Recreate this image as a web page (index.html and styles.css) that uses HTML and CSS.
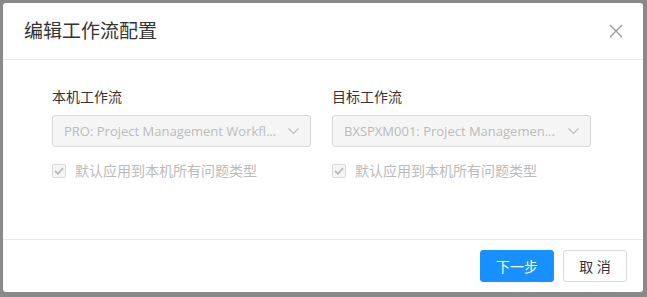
FILE: index.html
```html
<!DOCTYPE html>
<html lang="zh-CN">
<head>
  <meta charset="utf-8">
  <title>编辑工作流配置</title>
  <link rel="stylesheet" href="styles.css">
</head>
<body>
  <div class="dialog">
    <div class="dialog-header">
      <span class="dialog-title">编辑工作流配置</span>
      <button class="close-btn" aria-label="关闭">
        <svg width="14" height="14" viewBox="0 0 14 14"><path d="M1 1L13 13M13 1L1 13" stroke="#999" stroke-width="1.3" fill="none"/></svg>
      </button>
    </div>

    <div class="dialog-body">
      <div class="field">
        <div class="field-label">本机工作流</div>
        <div class="select disabled">
          <span class="select-value">PRO: Project Management Workfl...</span>
          <svg class="select-arrow" width="11" height="7" viewBox="0 0 11 7"><path d="M0.5 0.5L5.5 5.5L10.5 0.5" stroke="#bbb" stroke-width="1.1" fill="none"/></svg>
        </div>
        <label class="check disabled">
          <span class="check-box">
            <svg width="10" height="8" viewBox="0 0 10 8"><path d="M1 4L4 6.8L9 1" stroke="#bbb" stroke-width="1.8" fill="none"/></svg>
          </span>
          <span>默认应用到本机所有问题类型</span>
        </label>
      </div>

      <div class="field">
        <div class="field-label">目标工作流</div>
        <div class="select disabled">
          <span class="select-value">BXSPXM001: Project Managemen...</span>
          <svg class="select-arrow" width="11" height="7" viewBox="0 0 11 7"><path d="M0.5 0.5L5.5 5.5L10.5 0.5" stroke="#bbb" stroke-width="1.1" fill="none"/></svg>
        </div>
        <label class="check disabled">
          <span class="check-box">
            <svg width="10" height="8" viewBox="0 0 10 8"><path d="M1 4L4 6.8L9 1" stroke="#bbb" stroke-width="1.8" fill="none"/></svg>
          </span>
          <span>默认应用到本机所有问题类型</span>
        </label>
      </div>
    </div>

    <div class="dialog-footer">
      <button class="btn btn-primary">下一步</button>
      <button class="btn btn-default">取 消</button>
    </div>
  </div>
</body>
</html>
```

FILE: styles.css
```css
body {
  margin: 0;
  padding: 3px;
  background: #898989;
  font-family: "Open Sans", "Noto Sans CJK SC", sans-serif;
  font-size: 14px;
  color: #333;
  height: 100vh;
  box-sizing: border-box;
}

.dialog {
  width: 640px;
  height: 289px;
  background: white;
  border-radius: 3px;
  display: flex;
  flex-direction: column;
  box-sizing: border-box;
}

.dialog-header {
  height: 57px;
  display: flex;
  align-items: center;
  justify-content: space-between;
  padding: 0 20px 0 21px;
  border-bottom: 1px solid #e8e8e8;
  box-sizing: border-box;
}

.dialog-title {
  font-size: 19px;
  color: #333;
  line-height: 24px;
}

.close-btn {
  background: none;
  border: none;
  padding: 0;
  width: 14px;
  height: 14px;
  cursor: pointer;
  display: flex;
}

.dialog-body {
  flex: 1;
  display: flex;
  gap: 21px;
  padding: 27px 49px 0;
}

.field {
  width: 259px;
}

.field-label {
  line-height: 20px;
  color: #333;
  margin-bottom: 8px;
}

.select {
  height: 32px;
  border: 1px solid #d9d9d9;
  border-radius: 3px;
  display: flex;
  align-items: center;
  justify-content: space-between;
  padding: 0 11px;
  box-sizing: border-box;
}

.select.disabled {
  background: #f5f5f5;
  color: #bbb;
}

.select-value {
  font-size: 13px;
  white-space: nowrap;
  overflow: hidden;
  margin-right: 8px;
}

.select-arrow {
  flex-shrink: 0;
}

.check {
  display: flex;
  align-items: center;
  gap: 9px;
  margin-top: 14px;
  line-height: 20px;
  color: #bbb;
}

.check-box {
  width: 14px;
  height: 14px;
  border: 1px solid #d9d9d9;
  border-radius: 2px;
  background: #f5f5f5;
  box-sizing: border-box;
  display: flex;
  align-items: center;
  justify-content: center;
}

.dialog-footer {
  display: flex;
  justify-content: flex-end;
  gap: 9px;
  padding: 10px 16px;
  border-top: 1px solid #e8e8e8;
}

.btn {
  height: 32px;
  border-radius: 3px;
  font-family: inherit;
  font-size: 14px;
  cursor: pointer;
  padding: 0;
}

.btn-primary {
  width: 74px;
  background: #1890ff;
  border: 1px solid #1890ff;
  color: white;
}

.btn-default {
  width: 64px;
  background: white;
  border: 1px solid #d9d9d9;
  color: #333;
}
```
